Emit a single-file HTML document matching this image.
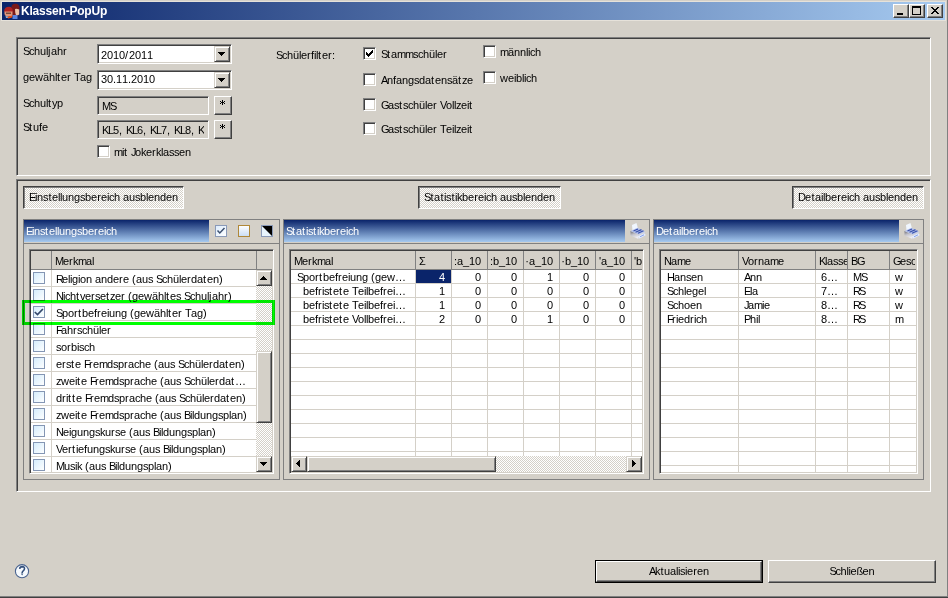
<!DOCTYPE html><html><head><meta charset="utf-8"><style>
html,body{margin:0;padding:0;}
body{width:948px;height:598px;overflow:hidden;background:#d4d0c8;position:relative;font-family:"Liberation Sans",sans-serif;font-size:11px;color:#000;}
div,svg{position:absolute;box-sizing:content-box;}
.t{white-space:nowrap;line-height:13px;font-size:11px;letter-spacing:0;}
.t i{display:inline-block;font-style:normal;}
.sunk{border:1px solid;border-color:#808080 #fff #fff #808080;box-shadow:inset 1px 1px #404040, inset -1px -1px #d4d0c8;}
.rais2{border:1px solid;border-color:#d4d0c8 #404040 #404040 #d4d0c8;box-shadow:inset 1px 1px #fff, inset -1px -1px #808080;background:#d4d0c8;}
.rais{border:1px solid;border-color:#fff #404040 #404040 #fff;box-shadow:inset -1px -1px #808080;background:#d4d0c8;}
.cb{width:11px;height:11px;border:1px solid;border-color:#808080 #fff #fff #808080;box-shadow:inset 1px 1px #404040, inset -1px -1px #d4d0c8;background:#fff;}
.chk{background-color:#fff;background-image:conic-gradient(#d4d0c8 25%, #fff 0 50%, #d4d0c8 0 75%, #fff 0);background-size:2px 2px;}
.grad{background:linear-gradient(#0a246a,#a6caf0);}
</style></head><body>

<div style="left:1px;top:1px;width:945px;height:20px;background:#e6e2da"></div>
<div style="left:947px;top:0px;width:1px;height:597px;background:#808080"></div>
<div style="left:0px;top:596px;width:947px;height:1px;background:#808080"></div>
<div style="left:0px;top:597px;width:948px;height:1px;background:#404040"></div>
<div style="left:2px;top:2px;width:943px;height:18px;background:linear-gradient(90deg,#0a246a,#a6caf0)"></div>
<div class="t" style="left:21px;top:5px;color:#fff;font-weight:bold;font-size:12px;letter-spacing:-0.2px">Klassen-PopUp</div>
<svg style="left:2px;top:2px" width="20" height="18" viewBox="0 0 20 18">
<path d="M9.5 4 Q10.5 1.5 14 1.8 Q17.5 2.2 17.5 6 L17.2 12 Q16.5 14 14.5 14 L10.5 14 Q9.5 10 9.5 4Z" fill="#7a1a1a"/>
<path d="M13 7 Q15 6.5 17.2 7.5 L17.2 12.5 Q16 13.5 14 13 Q13 11 13 7Z" fill="#eec4aa"/>
<path d="M10.5 13 L15.5 13 L15.5 17 L10.5 17Z" fill="#5a84e0"/>
<path d="M2.2 9 Q2.5 4.8 7 4.8 Q10.8 5 10.8 9 L10.8 10 L2.2 10Z" fill="#b02222"/>
<path d="M2.5 9.5 L10.5 9.5 L10.5 13.5 Q9 14.5 6.5 14.5 Q3 14.5 2.5 12Z" fill="#e09478"/>
<rect x="4" y="10.6" width="5" height="1.2" fill="#5a3a30"/>
<path d="M3.5 14 L6.5 14.5 L6.5 16 L4 16Z" fill="#9ab0d0"/>
<path d="M5.5 15 L10.5 13.5 L10 15.5 L6 16.5Z" fill="#f05010"/>
</svg>
<div class="rais" style="left:893px;top:4px;width:14px;height:12px;"></div>
<div class="rais" style="left:909px;top:4px;width:14px;height:12px;"></div>
<div class="rais" style="left:927px;top:4px;width:14px;height:12px;"></div>
<svg style="left:897px;top:13px" width="6" height="2" shape-rendering="crispEdges" fill="#000"><rect x="0" y="0" width="1" height="1"/><rect x="1" y="0" width="1" height="1"/><rect x="2" y="0" width="1" height="1"/><rect x="3" y="0" width="1" height="1"/><rect x="4" y="0" width="1" height="1"/><rect x="5" y="0" width="1" height="1"/><rect x="0" y="1" width="1" height="1"/><rect x="1" y="1" width="1" height="1"/><rect x="2" y="1" width="1" height="1"/><rect x="3" y="1" width="1" height="1"/><rect x="4" y="1" width="1" height="1"/><rect x="5" y="1" width="1" height="1"/></svg>
<svg style="left:912px;top:6px" width="9" height="9" shape-rendering="crispEdges" fill="#000"><rect x="0" y="0" width="1" height="1"/><rect x="1" y="0" width="1" height="1"/><rect x="2" y="0" width="1" height="1"/><rect x="3" y="0" width="1" height="1"/><rect x="4" y="0" width="1" height="1"/><rect x="5" y="0" width="1" height="1"/><rect x="6" y="0" width="1" height="1"/><rect x="7" y="0" width="1" height="1"/><rect x="8" y="0" width="1" height="1"/><rect x="0" y="1" width="1" height="1"/><rect x="1" y="1" width="1" height="1"/><rect x="2" y="1" width="1" height="1"/><rect x="3" y="1" width="1" height="1"/><rect x="4" y="1" width="1" height="1"/><rect x="5" y="1" width="1" height="1"/><rect x="6" y="1" width="1" height="1"/><rect x="7" y="1" width="1" height="1"/><rect x="8" y="1" width="1" height="1"/><rect x="0" y="2" width="1" height="1"/><rect x="8" y="2" width="1" height="1"/><rect x="0" y="3" width="1" height="1"/><rect x="8" y="3" width="1" height="1"/><rect x="0" y="4" width="1" height="1"/><rect x="8" y="4" width="1" height="1"/><rect x="0" y="5" width="1" height="1"/><rect x="8" y="5" width="1" height="1"/><rect x="0" y="6" width="1" height="1"/><rect x="8" y="6" width="1" height="1"/><rect x="0" y="7" width="1" height="1"/><rect x="8" y="7" width="1" height="1"/><rect x="0" y="8" width="1" height="1"/><rect x="1" y="8" width="1" height="1"/><rect x="2" y="8" width="1" height="1"/><rect x="3" y="8" width="1" height="1"/><rect x="4" y="8" width="1" height="1"/><rect x="5" y="8" width="1" height="1"/><rect x="6" y="8" width="1" height="1"/><rect x="7" y="8" width="1" height="1"/><rect x="8" y="8" width="1" height="1"/></svg>
<svg style="left:931px;top:7px" width="8" height="7" shape-rendering="crispEdges" fill="#000"><rect x="0" y="0" width="1" height="1"/><rect x="1" y="0" width="1" height="1"/><rect x="6" y="0" width="1" height="1"/><rect x="7" y="0" width="1" height="1"/><rect x="1" y="1" width="1" height="1"/><rect x="2" y="1" width="1" height="1"/><rect x="5" y="1" width="1" height="1"/><rect x="6" y="1" width="1" height="1"/><rect x="2" y="2" width="1" height="1"/><rect x="3" y="2" width="1" height="1"/><rect x="4" y="2" width="1" height="1"/><rect x="5" y="2" width="1" height="1"/><rect x="3" y="3" width="1" height="1"/><rect x="4" y="3" width="1" height="1"/><rect x="2" y="4" width="1" height="1"/><rect x="3" y="4" width="1" height="1"/><rect x="4" y="4" width="1" height="1"/><rect x="5" y="4" width="1" height="1"/><rect x="1" y="5" width="1" height="1"/><rect x="2" y="5" width="1" height="1"/><rect x="5" y="5" width="1" height="1"/><rect x="6" y="5" width="1" height="1"/><rect x="0" y="6" width="1" height="1"/><rect x="1" y="6" width="1" height="1"/><rect x="6" y="6" width="1" height="1"/><rect x="7" y="6" width="1" height="1"/></svg>
<div style="left:16px;top:37px;width:913px;height:137px;border:1px solid;border-color:#808080 #fff #fff #808080;box-shadow:inset 1px 1px #404040"></div>
<div class="t" style="left:23px;top:45px;"><i style="width:6px">S</i><i style="width:5px">c</i><i style="width:6px">h</i><i style="width:6px">u</i><i style="width:2px">l</i><i style="width:3px">j</i><i style="width:6px">a</i><i style="width:6px">h</i><i style="width:4px">r</i></div>
<div class="t" style="left:23px;top:71px;"><i style="width:6px">g</i><i style="width:6px">e</i><i style="width:8px">w</i><i style="width:6px">ä</i><i style="width:6px">h</i><i style="width:2px">l</i><i style="width:4px">t</i><i style="width:6px">e</i><i style="width:4px">r</i><i style="width:3px"> </i><i style="width:6px">T</i><i style="width:6px">a</i><i style="width:6px">g</i></div>
<div class="t" style="left:23px;top:97px;"><i style="width:6px">S</i><i style="width:5px">c</i><i style="width:6px">h</i><i style="width:6px">u</i><i style="width:2px">l</i><i style="width:4px">t</i><i style="width:5px">y</i><i style="width:6px">p</i></div>
<div class="t" style="left:23px;top:121px;"><i style="width:6px">S</i><i style="width:4px">t</i><i style="width:6px">u</i><i style="width:3px">f</i><i style="width:6px">e</i></div>
<div class="sunk" style="left:97px;top:44px;width:133px;height:18px;background:#fff"></div>
<div class="rais2" style="left:214px;top:46px;width:14px;height:14px;"></div>
<svg style="left:218px;top:52px" width="7" height="4" shape-rendering="crispEdges" fill="#000"><rect x="0" y="0" width="1" height="1"/><rect x="1" y="0" width="1" height="1"/><rect x="2" y="0" width="1" height="1"/><rect x="3" y="0" width="1" height="1"/><rect x="4" y="0" width="1" height="1"/><rect x="5" y="0" width="1" height="1"/><rect x="6" y="0" width="1" height="1"/><rect x="1" y="1" width="1" height="1"/><rect x="2" y="1" width="1" height="1"/><rect x="3" y="1" width="1" height="1"/><rect x="4" y="1" width="1" height="1"/><rect x="5" y="1" width="1" height="1"/><rect x="2" y="2" width="1" height="1"/><rect x="3" y="2" width="1" height="1"/><rect x="4" y="2" width="1" height="1"/><rect x="3" y="3" width="1" height="1"/></svg>
<div class="t" style="left:101px;top:49px;"><i style="width:6px">2</i><i style="width:6px">0</i><i style="width:6px">1</i><i style="width:6px">0</i><i style="width:4px">/</i><i style="width:6px">2</i><i style="width:6px">0</i><i style="width:6px">1</i><i style="width:6px">1</i></div>
<div class="sunk" style="left:97px;top:70px;width:133px;height:18px;background:#fff"></div>
<div class="rais2" style="left:214px;top:72px;width:14px;height:14px;"></div>
<svg style="left:218px;top:78px" width="7" height="4" shape-rendering="crispEdges" fill="#000"><rect x="0" y="0" width="1" height="1"/><rect x="1" y="0" width="1" height="1"/><rect x="2" y="0" width="1" height="1"/><rect x="3" y="0" width="1" height="1"/><rect x="4" y="0" width="1" height="1"/><rect x="5" y="0" width="1" height="1"/><rect x="6" y="0" width="1" height="1"/><rect x="1" y="1" width="1" height="1"/><rect x="2" y="1" width="1" height="1"/><rect x="3" y="1" width="1" height="1"/><rect x="4" y="1" width="1" height="1"/><rect x="5" y="1" width="1" height="1"/><rect x="2" y="2" width="1" height="1"/><rect x="3" y="2" width="1" height="1"/><rect x="4" y="2" width="1" height="1"/><rect x="3" y="3" width="1" height="1"/></svg>
<div class="t" style="left:101px;top:73px;"><i style="width:6px">3</i><i style="width:6px">0</i><i style="width:3px">.</i><i style="width:6px">1</i><i style="width:6px">1</i><i style="width:3px">.</i><i style="width:6px">2</i><i style="width:6px">0</i><i style="width:6px">1</i><i style="width:6px">0</i></div>
<div class="sunk" style="left:97px;top:96px;width:110px;height:17px;background:#d4d0c8"></div>
<div style="left:99px;top:98px;width:105px;height:15px;overflow:hidden"><div class="t" style="left:3px;top:2px"><i style="width:8px">M</i><i style="width:6px">S</i></div></div>
<div class="rais" style="left:214px;top:96px;width:16px;height:17px;"></div>
<svg style="left:220px;top:100px" width="5" height="5" shape-rendering="crispEdges"><rect x="2" y="0" width="1" height="1"/><rect x="0" y="1" width="1" height="1"/><rect x="2" y="1" width="1" height="1"/><rect x="4" y="1" width="1" height="1"/><rect x="1" y="2" width="1" height="1"/><rect x="2" y="2" width="1" height="1"/><rect x="3" y="2" width="1" height="1"/><rect x="0" y="3" width="1" height="1"/><rect x="2" y="3" width="1" height="1"/><rect x="4" y="3" width="1" height="1"/><rect x="2" y="4" width="1" height="1"/></svg>
<div class="sunk" style="left:97px;top:120px;width:110px;height:17px;background:#d4d0c8"></div>
<div style="left:99px;top:122px;width:105px;height:15px;overflow:hidden"><div class="t" style="left:3px;top:2px"><i style="width:6px">K</i><i style="width:5px">L</i><i style="width:6px">5</i><i style="width:4px">,</i><i style="width:3px"> </i><i style="width:6px">K</i><i style="width:5px">L</i><i style="width:6px">6</i><i style="width:4px">,</i><i style="width:3px"> </i><i style="width:6px">K</i><i style="width:5px">L</i><i style="width:6px">7</i><i style="width:4px">,</i><i style="width:3px"> </i><i style="width:6px">K</i><i style="width:5px">L</i><i style="width:6px">8</i><i style="width:4px">,</i><i style="width:3px"> </i><i style="width:6px">K</i></div></div>
<div class="rais" style="left:214px;top:120px;width:16px;height:17px;"></div>
<svg style="left:220px;top:124px" width="5" height="5" shape-rendering="crispEdges"><rect x="2" y="0" width="1" height="1"/><rect x="0" y="1" width="1" height="1"/><rect x="2" y="1" width="1" height="1"/><rect x="4" y="1" width="1" height="1"/><rect x="1" y="2" width="1" height="1"/><rect x="2" y="2" width="1" height="1"/><rect x="3" y="2" width="1" height="1"/><rect x="0" y="3" width="1" height="1"/><rect x="2" y="3" width="1" height="1"/><rect x="4" y="3" width="1" height="1"/><rect x="2" y="4" width="1" height="1"/></svg>
<div class="cb" style="left:97px;top:145px"></div>
<div class="t" style="left:114px;top:146px;"><i style="width:8px">m</i><i style="width:2px">i</i><i style="width:4px">t</i><i style="width:3px"> </i><i style="width:4px">J</i><i style="width:6px">o</i><i style="width:5px">k</i><i style="width:6px">e</i><i style="width:4px">r</i><i style="width:5px">k</i><i style="width:2px">l</i><i style="width:6px">a</i><i style="width:5px">s</i><i style="width:5px">s</i><i style="width:6px">e</i><i style="width:6px">n</i></div>
<div class="t" style="left:276px;top:49px;"><i style="width:6px">S</i><i style="width:5px">c</i><i style="width:6px">h</i><i style="width:6px">ü</i><i style="width:2px">l</i><i style="width:6px">e</i><i style="width:4px">r</i><i style="width:3px">f</i><i style="width:2px">i</i><i style="width:2px">l</i><i style="width:4px">t</i><i style="width:6px">e</i><i style="width:4px">r</i><i style="width:4px">:</i></div>
<div class="cb" style="left:363px;top:47px"></div>
<svg style="left:363px;top:47px" width="13" height="13" shape-rendering="crispEdges"><rect x="9" y="3" width="1" height="1"/><rect x="8" y="4" width="1" height="1"/><rect x="9" y="4" width="1" height="1"/><rect x="3" y="5" width="1" height="1"/><rect x="7" y="5" width="1" height="1"/><rect x="8" y="5" width="1" height="1"/><rect x="9" y="5" width="1" height="1"/><rect x="3" y="6" width="1" height="1"/><rect x="4" y="6" width="1" height="1"/><rect x="6" y="6" width="1" height="1"/><rect x="7" y="6" width="1" height="1"/><rect x="8" y="6" width="1" height="1"/><rect x="3" y="7" width="1" height="1"/><rect x="4" y="7" width="1" height="1"/><rect x="5" y="7" width="1" height="1"/><rect x="6" y="7" width="1" height="1"/><rect x="7" y="7" width="1" height="1"/><rect x="4" y="8" width="1" height="1"/><rect x="5" y="8" width="1" height="1"/><rect x="6" y="8" width="1" height="1"/><rect x="5" y="9" width="1" height="1"/></svg>
<div class="t" style="left:381px;top:48px;"><i style="width:6px">S</i><i style="width:4px">t</i><i style="width:6px">a</i><i style="width:8px">m</i><i style="width:8px">m</i><i style="width:5px">s</i><i style="width:5px">c</i><i style="width:6px">h</i><i style="width:6px">ü</i><i style="width:2px">l</i><i style="width:6px">e</i><i style="width:4px">r</i></div>
<div class="cb" style="left:363px;top:73px"></div>
<div class="t" style="left:381px;top:74px;"><i style="width:6px">A</i><i style="width:6px">n</i><i style="width:3px">f</i><i style="width:6px">a</i><i style="width:6px">n</i><i style="width:6px">g</i><i style="width:5px">s</i><i style="width:6px">d</i><i style="width:6px">a</i><i style="width:4px">t</i><i style="width:6px">e</i><i style="width:6px">n</i><i style="width:5px">s</i><i style="width:6px">ä</i><i style="width:4px">t</i><i style="width:5px">z</i><i style="width:6px">e</i></div>
<div class="cb" style="left:363px;top:98px"></div>
<div class="t" style="left:381px;top:99px;"><i style="width:7px">G</i><i style="width:6px">a</i><i style="width:5px">s</i><i style="width:4px">t</i><i style="width:5px">s</i><i style="width:5px">c</i><i style="width:6px">h</i><i style="width:6px">ü</i><i style="width:2px">l</i><i style="width:6px">e</i><i style="width:4px">r</i><i style="width:3px"> </i><i style="width:6px">V</i><i style="width:6px">o</i><i style="width:2px">l</i><i style="width:2px">l</i><i style="width:5px">z</i><i style="width:6px">e</i><i style="width:2px">i</i><i style="width:4px">t</i></div>
<div class="cb" style="left:363px;top:122px"></div>
<div class="t" style="left:381px;top:123px;"><i style="width:7px">G</i><i style="width:6px">a</i><i style="width:5px">s</i><i style="width:4px">t</i><i style="width:5px">s</i><i style="width:5px">c</i><i style="width:6px">h</i><i style="width:6px">ü</i><i style="width:2px">l</i><i style="width:6px">e</i><i style="width:4px">r</i><i style="width:3px"> </i><i style="width:6px">T</i><i style="width:6px">e</i><i style="width:2px">i</i><i style="width:2px">l</i><i style="width:5px">z</i><i style="width:6px">e</i><i style="width:2px">i</i><i style="width:4px">t</i></div>
<div class="cb" style="left:483px;top:45px"></div>
<div class="t" style="left:500px;top:46px;"><i style="width:8px">m</i><i style="width:6px">ä</i><i style="width:6px">n</i><i style="width:6px">n</i><i style="width:2px">l</i><i style="width:2px">i</i><i style="width:5px">c</i><i style="width:6px">h</i></div>
<div class="cb" style="left:483px;top:71px"></div>
<div class="t" style="left:500px;top:72px;"><i style="width:8px">w</i><i style="width:6px">e</i><i style="width:2px">i</i><i style="width:6px">b</i><i style="width:2px">l</i><i style="width:2px">i</i><i style="width:5px">c</i><i style="width:6px">h</i></div>
<div style="left:16px;top:179px;width:913px;height:311px;border:1px solid;border-color:#808080 #fff #fff #808080;box-shadow:inset 1px 1px #404040"></div>
<div class="chk" style="left:23px;top:186px;width:159px;height:21px;border:1px solid;border-color:#404040 #fff #fff #404040;box-shadow:inset 1px 1px #808080"></div>
<div class="t" style="left:23px;top:191px;width:161px;text-align:center"><i style="width:6px">E</i><i style="width:2px">i</i><i style="width:6px">n</i><i style="width:5px">s</i><i style="width:4px">t</i><i style="width:6px">e</i><i style="width:2px">l</i><i style="width:2px">l</i><i style="width:6px">u</i><i style="width:6px">n</i><i style="width:6px">g</i><i style="width:5px">s</i><i style="width:6px">b</i><i style="width:6px">e</i><i style="width:4px">r</i><i style="width:6px">e</i><i style="width:2px">i</i><i style="width:5px">c</i><i style="width:6px">h</i><i style="width:3px"> </i><i style="width:6px">a</i><i style="width:6px">u</i><i style="width:5px">s</i><i style="width:6px">b</i><i style="width:2px">l</i><i style="width:6px">e</i><i style="width:6px">n</i><i style="width:6px">d</i><i style="width:6px">e</i><i style="width:6px">n</i></div>
<div class="chk" style="left:418px;top:186px;width:141px;height:21px;border:1px solid;border-color:#404040 #fff #fff #404040;box-shadow:inset 1px 1px #808080"></div>
<div class="t" style="left:418px;top:191px;width:143px;text-align:center"><i style="width:6px">S</i><i style="width:4px">t</i><i style="width:6px">a</i><i style="width:4px">t</i><i style="width:2px">i</i><i style="width:5px">s</i><i style="width:4px">t</i><i style="width:2px">i</i><i style="width:5px">k</i><i style="width:6px">b</i><i style="width:6px">e</i><i style="width:4px">r</i><i style="width:6px">e</i><i style="width:2px">i</i><i style="width:5px">c</i><i style="width:6px">h</i><i style="width:3px"> </i><i style="width:6px">a</i><i style="width:6px">u</i><i style="width:5px">s</i><i style="width:6px">b</i><i style="width:2px">l</i><i style="width:6px">e</i><i style="width:6px">n</i><i style="width:6px">d</i><i style="width:6px">e</i><i style="width:6px">n</i></div>
<div class="chk" style="left:792px;top:186px;width:130px;height:21px;border:1px solid;border-color:#404040 #fff #fff #404040;box-shadow:inset 1px 1px #808080"></div>
<div class="t" style="left:792px;top:191px;width:132px;text-align:center"><i style="width:7px">D</i><i style="width:6px">e</i><i style="width:4px">t</i><i style="width:6px">a</i><i style="width:2px">i</i><i style="width:2px">l</i><i style="width:6px">b</i><i style="width:6px">e</i><i style="width:4px">r</i><i style="width:6px">e</i><i style="width:2px">i</i><i style="width:5px">c</i><i style="width:6px">h</i><i style="width:3px"> </i><i style="width:6px">a</i><i style="width:6px">u</i><i style="width:5px">s</i><i style="width:6px">b</i><i style="width:2px">l</i><i style="width:6px">e</i><i style="width:6px">n</i><i style="width:6px">d</i><i style="width:6px">e</i><i style="width:6px">n</i></div>
<div style="left:23px;top:219px;width:255px;height:259px;border:1px solid #808080"></div>
<div style="left:24px;top:220px;width:185px;height:22px;background:linear-gradient(#0a246a,#a6caf0)"></div>
<div style="left:24px;top:243px;width:255px;height:1px;background:#808080"></div>
<div class="t" style="left:26px;top:225px;color:#fff"><i style="width:6px">E</i><i style="width:2px">i</i><i style="width:6px">n</i><i style="width:5px">s</i><i style="width:4px">t</i><i style="width:6px">e</i><i style="width:2px">l</i><i style="width:2px">l</i><i style="width:6px">u</i><i style="width:6px">n</i><i style="width:6px">g</i><i style="width:5px">s</i><i style="width:6px">b</i><i style="width:6px">e</i><i style="width:4px">r</i><i style="width:6px">e</i><i style="width:2px">i</i><i style="width:5px">c</i><i style="width:6px">h</i></div>
<div style="left:283px;top:219px;width:365px;height:259px;border:1px solid #808080"></div>
<div style="left:284px;top:220px;width:341px;height:22px;background:linear-gradient(#0a246a,#a6caf0)"></div>
<div style="left:284px;top:243px;width:365px;height:1px;background:#808080"></div>
<div class="t" style="left:286px;top:225px;color:#fff"><i style="width:6px">S</i><i style="width:4px">t</i><i style="width:6px">a</i><i style="width:4px">t</i><i style="width:2px">i</i><i style="width:5px">s</i><i style="width:4px">t</i><i style="width:2px">i</i><i style="width:5px">k</i><i style="width:6px">b</i><i style="width:6px">e</i><i style="width:4px">r</i><i style="width:6px">e</i><i style="width:2px">i</i><i style="width:5px">c</i><i style="width:6px">h</i></div>
<div style="left:653px;top:219px;width:269px;height:259px;border:1px solid #808080"></div>
<div style="left:654px;top:220px;width:245px;height:22px;background:linear-gradient(#0a246a,#a6caf0)"></div>
<div style="left:654px;top:243px;width:269px;height:1px;background:#808080"></div>
<div class="t" style="left:656px;top:225px;color:#fff"><i style="width:7px">D</i><i style="width:6px">e</i><i style="width:4px">t</i><i style="width:6px">a</i><i style="width:2px">i</i><i style="width:2px">l</i><i style="width:6px">b</i><i style="width:6px">e</i><i style="width:4px">r</i><i style="width:6px">e</i><i style="width:2px">i</i><i style="width:5px">c</i><i style="width:6px">h</i></div>
<svg style="left:215px;top:225px" width="12" height="12"><defs><linearGradient id="g1" x1="0" y1="0" x2="1" y2="1"><stop offset="0" stop-color="#dcecfc"/><stop offset="1" stop-color="#fff"/></linearGradient></defs><rect x="0.5" y="0.5" width="11" height="11" fill="url(#g1)" stroke="#8a9ab8"/><path d="M2.5 5.5 L4.8 8 L9.5 3" fill="none" stroke="#3c5070" stroke-width="1.5"/></svg>
<svg style="left:238px;top:225px" width="12" height="12"><defs><linearGradient id="g2" x1="0" y1="0" x2="0" y2="1"><stop offset="0" stop-color="#fff"/><stop offset="1" stop-color="#c8dcf4"/></linearGradient></defs><rect x="0.5" y="0.5" width="11" height="11" fill="url(#g2)" stroke="#b08838"/></svg>
<svg style="left:261px;top:225px" width="12" height="12"><rect x="0.5" y="0.5" width="11" height="11" fill="#e8f4fc" stroke="#8a9ab8"/><path d="M1 1 L11 1 L11 11Z" fill="#000"/></svg>
<svg style="left:629px;top:222px" width="18" height="18" viewBox="0 0 18 18">
<defs><linearGradient id="pl629" x1="0" y1="0" x2="0.3" y2="1"><stop offset="0" stop-color="#6a6a72"/><stop offset="0.5" stop-color="#c4c4cc"/><stop offset="1" stop-color="#eeeef4"/></linearGradient></defs>
<path d="M1.5 9 L9.5 12.5 L9.5 17 L1.5 13.5Z" fill="url(#pl629)"/>
<path d="M9.5 12.5 L16 9.5 L16 13.5 L9.5 17Z" fill="#d0d4e0"/>
<path d="M3 3 L7.5 1 L9 6.5 L3.5 9Z" fill="#f0f6fe"/>
<path d="M1.5 9 L8.5 5.8 L16 9.5 L9.5 12.5Z" fill="#b4c2ec"/>
<path d="M4.5 9 L9 7 M6.5 10.3 L12.5 7.6 M9 11.3 L14.5 8.8" stroke="#3a52ac" stroke-width="1.2"/>
<path d="M8.5 14.5 L15 11.5 L17 13 L10.5 16.5Z" fill="#e4ecfe"/>
<path d="M11 14.8 L15 12.8" stroke="#7090e8" stroke-width="0.8"/>
</svg>
<svg style="left:903px;top:222px" width="18" height="18" viewBox="0 0 18 18">
<defs><linearGradient id="pl903" x1="0" y1="0" x2="0.3" y2="1"><stop offset="0" stop-color="#6a6a72"/><stop offset="0.5" stop-color="#c4c4cc"/><stop offset="1" stop-color="#eeeef4"/></linearGradient></defs>
<path d="M1.5 9 L9.5 12.5 L9.5 17 L1.5 13.5Z" fill="url(#pl903)"/>
<path d="M9.5 12.5 L16 9.5 L16 13.5 L9.5 17Z" fill="#d0d4e0"/>
<path d="M3 3 L7.5 1 L9 6.5 L3.5 9Z" fill="#f0f6fe"/>
<path d="M1.5 9 L8.5 5.8 L16 9.5 L9.5 12.5Z" fill="#b4c2ec"/>
<path d="M4.5 9 L9 7 M6.5 10.3 L12.5 7.6 M9 11.3 L14.5 8.8" stroke="#3a52ac" stroke-width="1.2"/>
<path d="M8.5 14.5 L15 11.5 L17 13 L10.5 16.5Z" fill="#e4ecfe"/>
<path d="M11 14.8 L15 12.8" stroke="#7090e8" stroke-width="0.8"/>
</svg>
<div class="sunk" style="left:29px;top:249px;width:243px;height:223px;background:#fff"></div>
<div style="left:31px;top:251px;width:241px;height:18px;background:#d4d0c8"></div>
<div style="left:31px;top:269px;width:241px;height:1px;background:#808080"></div>
<div style="left:51px;top:251px;width:1px;height:18px;background:#808080"></div>
<div style="left:256px;top:251px;width:1px;height:18px;background:#808080"></div>
<div class="t" style="left:55px;top:255px;"><i style="width:8px">M</i><i style="width:6px">e</i><i style="width:4px">r</i><i style="width:5px">k</i><i style="width:8px">m</i><i style="width:6px">a</i><i style="width:2px">l</i></div>
<div style="left:31px;top:270px;width:225px;height:202px;overflow:hidden">
<div style="left:0;top:16px;width:225px;height:1px;background:#d4d0c8"></div>
<svg style="left:2px;top:2px" width="12" height="12"><defs><linearGradient id="cg0" x1="0" y1="0" x2="1" y2="1"><stop offset="0" stop-color="#d4ecfc"/><stop offset="1" stop-color="#fff"/></linearGradient></defs><rect x="0.5" y="0.5" width="11" height="11" fill="url(#cg0)" stroke="#8496b4"/></svg>
<div class="t" style="left:25px;top:3px"><i style="width:6px">R</i><i style="width:6px">e</i><i style="width:2px">l</i><i style="width:2px">i</i><i style="width:6px">g</i><i style="width:2px">i</i><i style="width:6px">o</i><i style="width:6px">n</i><i style="width:3px"> </i><i style="width:6px">a</i><i style="width:6px">n</i><i style="width:6px">d</i><i style="width:6px">e</i><i style="width:4px">r</i><i style="width:6px">e</i><i style="width:3px"> </i><i style="width:4px">(</i><i style="width:6px">a</i><i style="width:6px">u</i><i style="width:5px">s</i><i style="width:3px"> </i><i style="width:6px">S</i><i style="width:5px">c</i><i style="width:6px">h</i><i style="width:6px">ü</i><i style="width:2px">l</i><i style="width:6px">e</i><i style="width:4px">r</i><i style="width:6px">d</i><i style="width:6px">a</i><i style="width:4px">t</i><i style="width:6px">e</i><i style="width:6px">n</i><i style="width:4px">)</i></div>
<div style="left:0;top:33px;width:225px;height:1px;background:#d4d0c8"></div>
<svg style="left:2px;top:19px" width="12" height="12"><defs><linearGradient id="cg1" x1="0" y1="0" x2="1" y2="1"><stop offset="0" stop-color="#d4ecfc"/><stop offset="1" stop-color="#fff"/></linearGradient></defs><rect x="0.5" y="0.5" width="11" height="11" fill="url(#cg1)" stroke="#8496b4"/></svg>
<div class="t" style="left:25px;top:20px"><i style="width:7px">N</i><i style="width:2px">i</i><i style="width:5px">c</i><i style="width:6px">h</i><i style="width:4px">t</i><i style="width:5px">v</i><i style="width:6px">e</i><i style="width:4px">r</i><i style="width:5px">s</i><i style="width:6px">e</i><i style="width:4px">t</i><i style="width:5px">z</i><i style="width:6px">e</i><i style="width:4px">r</i><i style="width:3px"> </i><i style="width:4px">(</i><i style="width:6px">g</i><i style="width:6px">e</i><i style="width:8px">w</i><i style="width:6px">ä</i><i style="width:6px">h</i><i style="width:2px">l</i><i style="width:4px">t</i><i style="width:6px">e</i><i style="width:5px">s</i><i style="width:3px"> </i><i style="width:6px">S</i><i style="width:5px">c</i><i style="width:6px">h</i><i style="width:6px">u</i><i style="width:2px">l</i><i style="width:3px">j</i><i style="width:6px">a</i><i style="width:6px">h</i><i style="width:4px">r</i><i style="width:4px">)</i></div>
<div style="left:0;top:50px;width:225px;height:1px;background:#d4d0c8"></div>
<svg style="left:2px;top:36px" width="12" height="12"><defs><linearGradient id="cg2" x1="0" y1="0" x2="1" y2="1"><stop offset="0" stop-color="#d4ecfc"/><stop offset="1" stop-color="#fff"/></linearGradient></defs><rect x="0.5" y="0.5" width="11" height="11" fill="url(#cg2)" stroke="#8496b4"/><path d="M1.8 6 L4.5 8.6 L9.9 3" fill="none" stroke="#34486c" stroke-width="1.7"/></svg>
<div class="t" style="left:25px;top:37px"><i style="width:6px">S</i><i style="width:6px">p</i><i style="width:6px">o</i><i style="width:4px">r</i><i style="width:4px">t</i><i style="width:6px">b</i><i style="width:6px">e</i><i style="width:3px">f</i><i style="width:4px">r</i><i style="width:6px">e</i><i style="width:2px">i</i><i style="width:6px">u</i><i style="width:6px">n</i><i style="width:6px">g</i><i style="width:3px"> </i><i style="width:4px">(</i><i style="width:6px">g</i><i style="width:6px">e</i><i style="width:8px">w</i><i style="width:6px">ä</i><i style="width:6px">h</i><i style="width:2px">l</i><i style="width:4px">t</i><i style="width:6px">e</i><i style="width:4px">r</i><i style="width:3px"> </i><i style="width:6px">T</i><i style="width:6px">a</i><i style="width:6px">g</i><i style="width:4px">)</i></div>
<div style="left:0;top:67px;width:225px;height:1px;background:#d4d0c8"></div>
<svg style="left:2px;top:53px" width="12" height="12"><defs><linearGradient id="cg3" x1="0" y1="0" x2="1" y2="1"><stop offset="0" stop-color="#d4ecfc"/><stop offset="1" stop-color="#fff"/></linearGradient></defs><rect x="0.5" y="0.5" width="11" height="11" fill="url(#cg3)" stroke="#8496b4"/></svg>
<div class="t" style="left:25px;top:54px"><i style="width:5px">F</i><i style="width:6px">a</i><i style="width:6px">h</i><i style="width:4px">r</i><i style="width:5px">s</i><i style="width:5px">c</i><i style="width:6px">h</i><i style="width:6px">ü</i><i style="width:2px">l</i><i style="width:6px">e</i><i style="width:4px">r</i></div>
<div style="left:0;top:84px;width:225px;height:1px;background:#d4d0c8"></div>
<svg style="left:2px;top:70px" width="12" height="12"><defs><linearGradient id="cg4" x1="0" y1="0" x2="1" y2="1"><stop offset="0" stop-color="#d4ecfc"/><stop offset="1" stop-color="#fff"/></linearGradient></defs><rect x="0.5" y="0.5" width="11" height="11" fill="url(#cg4)" stroke="#8496b4"/></svg>
<div class="t" style="left:25px;top:71px"><i style="width:5px">s</i><i style="width:6px">o</i><i style="width:4px">r</i><i style="width:6px">b</i><i style="width:2px">i</i><i style="width:5px">s</i><i style="width:5px">c</i><i style="width:6px">h</i></div>
<div style="left:0;top:101px;width:225px;height:1px;background:#d4d0c8"></div>
<svg style="left:2px;top:87px" width="12" height="12"><defs><linearGradient id="cg5" x1="0" y1="0" x2="1" y2="1"><stop offset="0" stop-color="#d4ecfc"/><stop offset="1" stop-color="#fff"/></linearGradient></defs><rect x="0.5" y="0.5" width="11" height="11" fill="url(#cg5)" stroke="#8496b4"/></svg>
<div class="t" style="left:25px;top:88px"><i style="width:6px">e</i><i style="width:4px">r</i><i style="width:5px">s</i><i style="width:4px">t</i><i style="width:6px">e</i><i style="width:3px"> </i><i style="width:5px">F</i><i style="width:4px">r</i><i style="width:6px">e</i><i style="width:8px">m</i><i style="width:6px">d</i><i style="width:5px">s</i><i style="width:6px">p</i><i style="width:4px">r</i><i style="width:6px">a</i><i style="width:5px">c</i><i style="width:6px">h</i><i style="width:6px">e</i><i style="width:3px"> </i><i style="width:4px">(</i><i style="width:6px">a</i><i style="width:6px">u</i><i style="width:5px">s</i><i style="width:3px"> </i><i style="width:6px">S</i><i style="width:5px">c</i><i style="width:6px">h</i><i style="width:6px">ü</i><i style="width:2px">l</i><i style="width:6px">e</i><i style="width:4px">r</i><i style="width:6px">d</i><i style="width:6px">a</i><i style="width:4px">t</i><i style="width:6px">e</i><i style="width:6px">n</i><i style="width:4px">)</i></div>
<div style="left:0;top:118px;width:225px;height:1px;background:#d4d0c8"></div>
<svg style="left:2px;top:104px" width="12" height="12"><defs><linearGradient id="cg6" x1="0" y1="0" x2="1" y2="1"><stop offset="0" stop-color="#d4ecfc"/><stop offset="1" stop-color="#fff"/></linearGradient></defs><rect x="0.5" y="0.5" width="11" height="11" fill="url(#cg6)" stroke="#8496b4"/></svg>
<div class="t" style="left:25px;top:105px"><i style="width:5px">z</i><i style="width:8px">w</i><i style="width:6px">e</i><i style="width:2px">i</i><i style="width:4px">t</i><i style="width:6px">e</i><i style="width:3px"> </i><i style="width:5px">F</i><i style="width:4px">r</i><i style="width:6px">e</i><i style="width:8px">m</i><i style="width:6px">d</i><i style="width:5px">s</i><i style="width:6px">p</i><i style="width:4px">r</i><i style="width:6px">a</i><i style="width:5px">c</i><i style="width:6px">h</i><i style="width:6px">e</i><i style="width:3px"> </i><i style="width:4px">(</i><i style="width:6px">a</i><i style="width:6px">u</i><i style="width:5px">s</i><i style="width:3px"> </i><i style="width:6px">S</i><i style="width:5px">c</i><i style="width:6px">h</i><i style="width:6px">ü</i><i style="width:2px">l</i><i style="width:6px">e</i><i style="width:4px">r</i><i style="width:6px">d</i><i style="width:6px">a</i><i style="width:4px">t</i><i style="width:11px">…</i></div>
<div style="left:0;top:135px;width:225px;height:1px;background:#d4d0c8"></div>
<svg style="left:2px;top:121px" width="12" height="12"><defs><linearGradient id="cg7" x1="0" y1="0" x2="1" y2="1"><stop offset="0" stop-color="#d4ecfc"/><stop offset="1" stop-color="#fff"/></linearGradient></defs><rect x="0.5" y="0.5" width="11" height="11" fill="url(#cg7)" stroke="#8496b4"/></svg>
<div class="t" style="left:25px;top:122px"><i style="width:6px">d</i><i style="width:4px">r</i><i style="width:2px">i</i><i style="width:4px">t</i><i style="width:4px">t</i><i style="width:6px">e</i><i style="width:3px"> </i><i style="width:5px">F</i><i style="width:4px">r</i><i style="width:6px">e</i><i style="width:8px">m</i><i style="width:6px">d</i><i style="width:5px">s</i><i style="width:6px">p</i><i style="width:4px">r</i><i style="width:6px">a</i><i style="width:5px">c</i><i style="width:6px">h</i><i style="width:6px">e</i><i style="width:3px"> </i><i style="width:4px">(</i><i style="width:6px">a</i><i style="width:6px">u</i><i style="width:5px">s</i><i style="width:3px"> </i><i style="width:6px">S</i><i style="width:5px">c</i><i style="width:6px">h</i><i style="width:6px">ü</i><i style="width:2px">l</i><i style="width:6px">e</i><i style="width:4px">r</i><i style="width:6px">d</i><i style="width:6px">a</i><i style="width:4px">t</i><i style="width:6px">e</i><i style="width:6px">n</i><i style="width:4px">)</i></div>
<div style="left:0;top:152px;width:225px;height:1px;background:#d4d0c8"></div>
<svg style="left:2px;top:138px" width="12" height="12"><defs><linearGradient id="cg8" x1="0" y1="0" x2="1" y2="1"><stop offset="0" stop-color="#d4ecfc"/><stop offset="1" stop-color="#fff"/></linearGradient></defs><rect x="0.5" y="0.5" width="11" height="11" fill="url(#cg8)" stroke="#8496b4"/></svg>
<div class="t" style="left:25px;top:139px"><i style="width:5px">z</i><i style="width:8px">w</i><i style="width:6px">e</i><i style="width:2px">i</i><i style="width:4px">t</i><i style="width:6px">e</i><i style="width:3px"> </i><i style="width:5px">F</i><i style="width:4px">r</i><i style="width:6px">e</i><i style="width:8px">m</i><i style="width:6px">d</i><i style="width:5px">s</i><i style="width:6px">p</i><i style="width:4px">r</i><i style="width:6px">a</i><i style="width:5px">c</i><i style="width:6px">h</i><i style="width:6px">e</i><i style="width:3px"> </i><i style="width:4px">(</i><i style="width:6px">a</i><i style="width:6px">u</i><i style="width:5px">s</i><i style="width:3px"> </i><i style="width:6px">B</i><i style="width:2px">i</i><i style="width:2px">l</i><i style="width:6px">d</i><i style="width:6px">u</i><i style="width:6px">n</i><i style="width:6px">g</i><i style="width:5px">s</i><i style="width:6px">p</i><i style="width:2px">l</i><i style="width:6px">a</i><i style="width:6px">n</i><i style="width:4px">)</i></div>
<div style="left:0;top:169px;width:225px;height:1px;background:#d4d0c8"></div>
<svg style="left:2px;top:155px" width="12" height="12"><defs><linearGradient id="cg9" x1="0" y1="0" x2="1" y2="1"><stop offset="0" stop-color="#d4ecfc"/><stop offset="1" stop-color="#fff"/></linearGradient></defs><rect x="0.5" y="0.5" width="11" height="11" fill="url(#cg9)" stroke="#8496b4"/></svg>
<div class="t" style="left:25px;top:156px"><i style="width:7px">N</i><i style="width:6px">e</i><i style="width:2px">i</i><i style="width:6px">g</i><i style="width:6px">u</i><i style="width:6px">n</i><i style="width:6px">g</i><i style="width:5px">s</i><i style="width:5px">k</i><i style="width:6px">u</i><i style="width:4px">r</i><i style="width:5px">s</i><i style="width:6px">e</i><i style="width:3px"> </i><i style="width:4px">(</i><i style="width:6px">a</i><i style="width:6px">u</i><i style="width:5px">s</i><i style="width:3px"> </i><i style="width:6px">B</i><i style="width:2px">i</i><i style="width:2px">l</i><i style="width:6px">d</i><i style="width:6px">u</i><i style="width:6px">n</i><i style="width:6px">g</i><i style="width:5px">s</i><i style="width:6px">p</i><i style="width:2px">l</i><i style="width:6px">a</i><i style="width:6px">n</i><i style="width:4px">)</i></div>
<div style="left:0;top:186px;width:225px;height:1px;background:#d4d0c8"></div>
<svg style="left:2px;top:172px" width="12" height="12"><defs><linearGradient id="cg10" x1="0" y1="0" x2="1" y2="1"><stop offset="0" stop-color="#d4ecfc"/><stop offset="1" stop-color="#fff"/></linearGradient></defs><rect x="0.5" y="0.5" width="11" height="11" fill="url(#cg10)" stroke="#8496b4"/></svg>
<div class="t" style="left:25px;top:173px"><i style="width:6px">V</i><i style="width:6px">e</i><i style="width:4px">r</i><i style="width:4px">t</i><i style="width:2px">i</i><i style="width:6px">e</i><i style="width:3px">f</i><i style="width:6px">u</i><i style="width:6px">n</i><i style="width:6px">g</i><i style="width:5px">s</i><i style="width:5px">k</i><i style="width:6px">u</i><i style="width:4px">r</i><i style="width:5px">s</i><i style="width:6px">e</i><i style="width:3px"> </i><i style="width:4px">(</i><i style="width:6px">a</i><i style="width:6px">u</i><i style="width:5px">s</i><i style="width:3px"> </i><i style="width:6px">B</i><i style="width:2px">i</i><i style="width:2px">l</i><i style="width:6px">d</i><i style="width:6px">u</i><i style="width:6px">n</i><i style="width:6px">g</i><i style="width:5px">s</i><i style="width:6px">p</i><i style="width:2px">l</i><i style="width:6px">a</i><i style="width:6px">n</i><i style="width:4px">)</i></div>
<div style="left:0;top:203px;width:225px;height:1px;background:#d4d0c8"></div>
<svg style="left:2px;top:189px" width="12" height="12"><defs><linearGradient id="cg11" x1="0" y1="0" x2="1" y2="1"><stop offset="0" stop-color="#d4ecfc"/><stop offset="1" stop-color="#fff"/></linearGradient></defs><rect x="0.5" y="0.5" width="11" height="11" fill="url(#cg11)" stroke="#8496b4"/></svg>
<div class="t" style="left:25px;top:190px"><i style="width:8px">M</i><i style="width:6px">u</i><i style="width:5px">s</i><i style="width:2px">i</i><i style="width:5px">k</i><i style="width:3px"> </i><i style="width:4px">(</i><i style="width:6px">a</i><i style="width:6px">u</i><i style="width:5px">s</i><i style="width:3px"> </i><i style="width:6px">B</i><i style="width:2px">i</i><i style="width:2px">l</i><i style="width:6px">d</i><i style="width:6px">u</i><i style="width:6px">n</i><i style="width:6px">g</i><i style="width:5px">s</i><i style="width:6px">p</i><i style="width:2px">l</i><i style="width:6px">a</i><i style="width:6px">n</i><i style="width:4px">)</i></div>
<div style="left:20px;top:0;width:1px;height:202px;background:#d4d0c8"></div>
</div>
<div class="chk" style="left:256px;top:286px;width:16px;height:170px"></div>
<div class="rais2" style="left:256px;top:270px;width:14px;height:14px;"></div>
<svg style="left:260px;top:276px" width="7" height="4" shape-rendering="crispEdges" fill="#000"><rect x="3" y="0" width="1" height="1"/><rect x="2" y="1" width="1" height="1"/><rect x="3" y="1" width="1" height="1"/><rect x="4" y="1" width="1" height="1"/><rect x="1" y="2" width="1" height="1"/><rect x="2" y="2" width="1" height="1"/><rect x="3" y="2" width="1" height="1"/><rect x="4" y="2" width="1" height="1"/><rect x="5" y="2" width="1" height="1"/><rect x="0" y="3" width="1" height="1"/><rect x="1" y="3" width="1" height="1"/><rect x="2" y="3" width="1" height="1"/><rect x="3" y="3" width="1" height="1"/><rect x="4" y="3" width="1" height="1"/><rect x="5" y="3" width="1" height="1"/><rect x="6" y="3" width="1" height="1"/></svg>
<div class="rais2" style="left:256px;top:351px;width:14px;height:70px;"></div>
<div class="rais2" style="left:256px;top:456px;width:14px;height:14px;"></div>
<svg style="left:260px;top:462px" width="7" height="4" shape-rendering="crispEdges" fill="#000"><rect x="0" y="0" width="1" height="1"/><rect x="1" y="0" width="1" height="1"/><rect x="2" y="0" width="1" height="1"/><rect x="3" y="0" width="1" height="1"/><rect x="4" y="0" width="1" height="1"/><rect x="5" y="0" width="1" height="1"/><rect x="6" y="0" width="1" height="1"/><rect x="1" y="1" width="1" height="1"/><rect x="2" y="1" width="1" height="1"/><rect x="3" y="1" width="1" height="1"/><rect x="4" y="1" width="1" height="1"/><rect x="5" y="1" width="1" height="1"/><rect x="2" y="2" width="1" height="1"/><rect x="3" y="2" width="1" height="1"/><rect x="4" y="2" width="1" height="1"/><rect x="3" y="3" width="1" height="1"/></svg>
<div style="left:22px;top:300px;width:247px;height:19px;border:3px solid #00ff00;mix-blend-mode:multiply"></div>
<div class="sunk" style="left:289px;top:249px;width:353px;height:223px;background:#fff"></div>
<div style="left:291px;top:251px;width:351px;height:18px;background:#d4d0c8"></div>
<div style="left:291px;top:269px;width:351px;height:1px;background:#808080"></div>
<div style="left:291px;top:251px;width:351px;height:221px;overflow:hidden">
<div style="left:124px;top:0;width:1px;height:18px;background:#808080"></div>
<div style="left:124px;top:19px;width:1px;height:202px;background:#d4d0c8"></div>
<div style="left:160px;top:0;width:1px;height:18px;background:#808080"></div>
<div style="left:160px;top:19px;width:1px;height:202px;background:#d4d0c8"></div>
<div style="left:196px;top:0;width:1px;height:18px;background:#808080"></div>
<div style="left:196px;top:19px;width:1px;height:202px;background:#d4d0c8"></div>
<div style="left:232px;top:0;width:1px;height:18px;background:#808080"></div>
<div style="left:232px;top:19px;width:1px;height:202px;background:#d4d0c8"></div>
<div style="left:268px;top:0;width:1px;height:18px;background:#808080"></div>
<div style="left:268px;top:19px;width:1px;height:202px;background:#d4d0c8"></div>
<div style="left:304px;top:0;width:1px;height:18px;background:#808080"></div>
<div style="left:304px;top:19px;width:1px;height:202px;background:#d4d0c8"></div>
<div style="left:340px;top:0;width:1px;height:18px;background:#808080"></div>
<div style="left:340px;top:19px;width:1px;height:202px;background:#d4d0c8"></div>
<div style="left:0;top:32px;width:351px;height:1px;background:#d4d0c8"></div>
<div style="left:0;top:46px;width:351px;height:1px;background:#d4d0c8"></div>
<div style="left:0;top:60px;width:351px;height:1px;background:#d4d0c8"></div>
<div style="left:0;top:74px;width:351px;height:1px;background:#d4d0c8"></div>
<div style="left:0;top:88px;width:351px;height:1px;background:#d4d0c8"></div>
<div style="left:0;top:102px;width:351px;height:1px;background:#d4d0c8"></div>
<div style="left:0;top:116px;width:351px;height:1px;background:#d4d0c8"></div>
<div style="left:0;top:130px;width:351px;height:1px;background:#d4d0c8"></div>
<div style="left:0;top:144px;width:351px;height:1px;background:#d4d0c8"></div>
<div style="left:0;top:158px;width:351px;height:1px;background:#d4d0c8"></div>
<div style="left:0;top:172px;width:351px;height:1px;background:#d4d0c8"></div>
<div style="left:0;top:186px;width:351px;height:1px;background:#d4d0c8"></div>
<div style="left:0;top:200px;width:351px;height:1px;background:#d4d0c8"></div>
<div style="left:0;top:214px;width:351px;height:1px;background:#d4d0c8"></div>
</div>
<div class="t" style="left:294px;top:255px;"><i style="width:8px">M</i><i style="width:6px">e</i><i style="width:4px">r</i><i style="width:5px">k</i><i style="width:8px">m</i><i style="width:6px">a</i><i style="width:2px">l</i></div>
<div class="t" style="left:419px;top:255px;"><i style="width:6px">Σ</i></div>
<div class="t" style="left:452px;top:255px;width:29px;text-align:right"><i style="width:4px">:</i><i style="width:6px">a</i><i style="width:6px">_</i><i style="width:6px">1</i><i style="width:6px">0</i></div>
<div class="t" style="left:488px;top:255px;width:29px;text-align:right"><i style="width:4px">:</i><i style="width:6px">b</i><i style="width:6px">_</i><i style="width:6px">1</i><i style="width:6px">0</i></div>
<div class="t" style="left:524px;top:255px;width:29px;text-align:right">·<i style="width:6px">a</i><i style="width:6px">_</i><i style="width:6px">1</i><i style="width:6px">0</i></div>
<div class="t" style="left:560px;top:255px;width:29px;text-align:right">·<i style="width:6px">b</i><i style="width:6px">_</i><i style="width:6px">1</i><i style="width:6px">0</i></div>
<div class="t" style="left:596px;top:255px;width:29px;text-align:right">'<i style="width:6px">a</i><i style="width:6px">_</i><i style="width:6px">1</i><i style="width:6px">0</i></div>
<div class="t" style="left:634px;top:255px;">'<i style="width:6px">b</i></div>
<div style="left:416px;top:270px;width:35px;height:13px;background:#0a246a"></div>
<div class="t" style="left:297px;top:271px"><i style="width:6px">S</i><i style="width:6px">p</i><i style="width:6px">o</i><i style="width:4px">r</i><i style="width:4px">t</i><i style="width:6px">b</i><i style="width:6px">e</i><i style="width:3px">f</i><i style="width:4px">r</i><i style="width:6px">e</i><i style="width:2px">i</i><i style="width:6px">u</i><i style="width:6px">n</i><i style="width:6px">g</i><i style="width:3px"> </i><i style="width:4px">(</i><i style="width:6px">g</i><i style="width:6px">e</i><i style="width:8px">w</i><i style="width:11px">…</i></div>
<div class="t" style="left:416px;top:271px;width:29px;text-align:right;color:#fff"><i style="width:6px">4</i></div>
<div class="t" style="left:452px;top:271px;width:29px;text-align:right;color:#000"><i style="width:6px">0</i></div>
<div class="t" style="left:488px;top:271px;width:29px;text-align:right;color:#000"><i style="width:6px">0</i></div>
<div class="t" style="left:524px;top:271px;width:29px;text-align:right;color:#000"><i style="width:6px">1</i></div>
<div class="t" style="left:560px;top:271px;width:29px;text-align:right;color:#000"><i style="width:6px">0</i></div>
<div class="t" style="left:596px;top:271px;width:29px;text-align:right;color:#000"><i style="width:6px">0</i></div>
<div class="t" style="left:303px;top:285px"><i style="width:6px">b</i><i style="width:6px">e</i><i style="width:3px">f</i><i style="width:4px">r</i><i style="width:2px">i</i><i style="width:5px">s</i><i style="width:4px">t</i><i style="width:6px">e</i><i style="width:4px">t</i><i style="width:6px">e</i><i style="width:3px"> </i><i style="width:6px">T</i><i style="width:6px">e</i><i style="width:2px">i</i><i style="width:2px">l</i><i style="width:6px">b</i><i style="width:6px">e</i><i style="width:3px">f</i><i style="width:4px">r</i><i style="width:6px">e</i><i style="width:2px">i</i><i style="width:11px">…</i></div>
<div class="t" style="left:416px;top:285px;width:29px;text-align:right;color:#000"><i style="width:6px">1</i></div>
<div class="t" style="left:452px;top:285px;width:29px;text-align:right;color:#000"><i style="width:6px">0</i></div>
<div class="t" style="left:488px;top:285px;width:29px;text-align:right;color:#000"><i style="width:6px">0</i></div>
<div class="t" style="left:524px;top:285px;width:29px;text-align:right;color:#000"><i style="width:6px">0</i></div>
<div class="t" style="left:560px;top:285px;width:29px;text-align:right;color:#000"><i style="width:6px">0</i></div>
<div class="t" style="left:596px;top:285px;width:29px;text-align:right;color:#000"><i style="width:6px">0</i></div>
<div class="t" style="left:303px;top:299px"><i style="width:6px">b</i><i style="width:6px">e</i><i style="width:3px">f</i><i style="width:4px">r</i><i style="width:2px">i</i><i style="width:5px">s</i><i style="width:4px">t</i><i style="width:6px">e</i><i style="width:4px">t</i><i style="width:6px">e</i><i style="width:3px"> </i><i style="width:6px">T</i><i style="width:6px">e</i><i style="width:2px">i</i><i style="width:2px">l</i><i style="width:6px">b</i><i style="width:6px">e</i><i style="width:3px">f</i><i style="width:4px">r</i><i style="width:6px">e</i><i style="width:2px">i</i><i style="width:11px">…</i></div>
<div class="t" style="left:416px;top:299px;width:29px;text-align:right;color:#000"><i style="width:6px">1</i></div>
<div class="t" style="left:452px;top:299px;width:29px;text-align:right;color:#000"><i style="width:6px">0</i></div>
<div class="t" style="left:488px;top:299px;width:29px;text-align:right;color:#000"><i style="width:6px">0</i></div>
<div class="t" style="left:524px;top:299px;width:29px;text-align:right;color:#000"><i style="width:6px">0</i></div>
<div class="t" style="left:560px;top:299px;width:29px;text-align:right;color:#000"><i style="width:6px">0</i></div>
<div class="t" style="left:596px;top:299px;width:29px;text-align:right;color:#000"><i style="width:6px">0</i></div>
<div class="t" style="left:303px;top:313px"><i style="width:6px">b</i><i style="width:6px">e</i><i style="width:3px">f</i><i style="width:4px">r</i><i style="width:2px">i</i><i style="width:5px">s</i><i style="width:4px">t</i><i style="width:6px">e</i><i style="width:4px">t</i><i style="width:6px">e</i><i style="width:3px"> </i><i style="width:6px">V</i><i style="width:6px">o</i><i style="width:2px">l</i><i style="width:2px">l</i><i style="width:6px">b</i><i style="width:6px">e</i><i style="width:3px">f</i><i style="width:4px">r</i><i style="width:6px">e</i><i style="width:2px">i</i><i style="width:11px">…</i></div>
<div class="t" style="left:416px;top:313px;width:29px;text-align:right;color:#000"><i style="width:6px">2</i></div>
<div class="t" style="left:452px;top:313px;width:29px;text-align:right;color:#000"><i style="width:6px">0</i></div>
<div class="t" style="left:488px;top:313px;width:29px;text-align:right;color:#000"><i style="width:6px">0</i></div>
<div class="t" style="left:524px;top:313px;width:29px;text-align:right;color:#000"><i style="width:6px">1</i></div>
<div class="t" style="left:560px;top:313px;width:29px;text-align:right;color:#000"><i style="width:6px">0</i></div>
<div class="t" style="left:596px;top:313px;width:29px;text-align:right;color:#000"><i style="width:6px">0</i></div>
<div class="chk" style="left:291px;top:456px;width:351px;height:16px"></div>
<div class="rais2" style="left:291px;top:456px;width:14px;height:14px;"></div>
<svg style="left:296px;top:460px" width="4" height="7" shape-rendering="crispEdges" fill="#000"><rect x="3" y="0" width="1" height="1"/><rect x="2" y="1" width="1" height="1"/><rect x="3" y="1" width="1" height="1"/><rect x="1" y="2" width="1" height="1"/><rect x="2" y="2" width="1" height="1"/><rect x="3" y="2" width="1" height="1"/><rect x="0" y="3" width="1" height="1"/><rect x="1" y="3" width="1" height="1"/><rect x="2" y="3" width="1" height="1"/><rect x="3" y="3" width="1" height="1"/><rect x="1" y="4" width="1" height="1"/><rect x="2" y="4" width="1" height="1"/><rect x="3" y="4" width="1" height="1"/><rect x="2" y="5" width="1" height="1"/><rect x="3" y="5" width="1" height="1"/><rect x="3" y="6" width="1" height="1"/></svg>
<div class="rais2" style="left:307px;top:456px;width:187px;height:14px;"></div>
<div class="rais2" style="left:626px;top:456px;width:14px;height:14px;"></div>
<svg style="left:632px;top:460px" width="4" height="7" shape-rendering="crispEdges" fill="#000"><rect x="0" y="0" width="1" height="1"/><rect x="0" y="1" width="1" height="1"/><rect x="1" y="1" width="1" height="1"/><rect x="0" y="2" width="1" height="1"/><rect x="1" y="2" width="1" height="1"/><rect x="2" y="2" width="1" height="1"/><rect x="0" y="3" width="1" height="1"/><rect x="1" y="3" width="1" height="1"/><rect x="2" y="3" width="1" height="1"/><rect x="3" y="3" width="1" height="1"/><rect x="0" y="4" width="1" height="1"/><rect x="1" y="4" width="1" height="1"/><rect x="2" y="4" width="1" height="1"/><rect x="0" y="5" width="1" height="1"/><rect x="1" y="5" width="1" height="1"/><rect x="0" y="6" width="1" height="1"/></svg>
<div class="sunk" style="left:659px;top:249px;width:257px;height:223px;background:#fff"></div>
<div style="left:661px;top:251px;width:255px;height:18px;background:#d4d0c8"></div>
<div style="left:661px;top:269px;width:255px;height:1px;background:#808080"></div>
<div style="left:661px;top:251px;width:255px;height:221px;overflow:hidden">
<div style="left:77px;top:0;width:1px;height:18px;background:#808080"></div>
<div style="left:77px;top:19px;width:1px;height:202px;background:#d4d0c8"></div>
<div style="left:154px;top:0;width:1px;height:18px;background:#808080"></div>
<div style="left:154px;top:19px;width:1px;height:202px;background:#d4d0c8"></div>
<div style="left:186px;top:0;width:1px;height:18px;background:#808080"></div>
<div style="left:186px;top:19px;width:1px;height:202px;background:#d4d0c8"></div>
<div style="left:228px;top:0;width:1px;height:18px;background:#808080"></div>
<div style="left:228px;top:19px;width:1px;height:202px;background:#d4d0c8"></div>
<div style="left:0;top:32px;width:255px;height:1px;background:#d4d0c8"></div>
<div style="left:0;top:46px;width:255px;height:1px;background:#d4d0c8"></div>
<div style="left:0;top:60px;width:255px;height:1px;background:#d4d0c8"></div>
<div style="left:0;top:74px;width:255px;height:1px;background:#d4d0c8"></div>
<div style="left:0;top:88px;width:255px;height:1px;background:#d4d0c8"></div>
<div style="left:0;top:102px;width:255px;height:1px;background:#d4d0c8"></div>
<div style="left:0;top:116px;width:255px;height:1px;background:#d4d0c8"></div>
<div style="left:0;top:130px;width:255px;height:1px;background:#d4d0c8"></div>
<div style="left:0;top:144px;width:255px;height:1px;background:#d4d0c8"></div>
<div style="left:0;top:158px;width:255px;height:1px;background:#d4d0c8"></div>
<div style="left:0;top:172px;width:255px;height:1px;background:#d4d0c8"></div>
<div style="left:0;top:186px;width:255px;height:1px;background:#d4d0c8"></div>
<div style="left:0;top:200px;width:255px;height:1px;background:#d4d0c8"></div>
<div style="left:0;top:214px;width:255px;height:1px;background:#d4d0c8"></div>
<div style="left:0px;top:0;width:77px;height:18px;overflow:hidden"><div class="t" style="left:3px;top:4px"><i style="width:7px">N</i><i style="width:6px">a</i><i style="width:8px">m</i><i style="width:6px">e</i></div></div>
<div style="left:78px;top:0;width:76px;height:18px;overflow:hidden"><div class="t" style="left:3px;top:4px"><i style="width:6px">V</i><i style="width:6px">o</i><i style="width:4px">r</i><i style="width:6px">n</i><i style="width:6px">a</i><i style="width:8px">m</i><i style="width:6px">e</i></div></div>
<div style="left:155px;top:0;width:31px;height:18px;overflow:hidden"><div class="t" style="left:3px;top:4px"><i style="width:6px">K</i><i style="width:2px">l</i><i style="width:6px">a</i><i style="width:5px">s</i><i style="width:5px">s</i><i style="width:6px">e</i></div></div>
<div style="left:187px;top:0;width:41px;height:18px;overflow:hidden"><div class="t" style="left:3px;top:4px"><i style="width:6px">B</i><i style="width:7px">G</i></div></div>
<div style="left:229px;top:0;width:25px;height:18px;overflow:hidden"><div class="t" style="left:3px;top:4px"><i style="width:7px">G</i><i style="width:6px">e</i><i style="width:5px">s</i><i style="width:5px">c</i><i style="width:6px">h</i><i style="width:2px">l</i><i style="width:6px">e</i><i style="width:5px">c</i><i style="width:6px">h</i><i style="width:4px">t</i></div></div>
</div>
<div class="t" style="left:667px;top:271px"><i style="width:7px">H</i><i style="width:6px">a</i><i style="width:6px">n</i><i style="width:5px">s</i><i style="width:6px">e</i><i style="width:6px">n</i></div>
<div class="t" style="left:744px;top:271px"><i style="width:6px">A</i><i style="width:6px">n</i><i style="width:6px">n</i></div>
<div class="t" style="left:821px;top:271px"><i style="width:6px">6</i><i style="width:11px">…</i></div>
<div class="t" style="left:853px;top:271px"><i style="width:8px">M</i><i style="width:6px">S</i></div>
<div class="t" style="left:895px;top:271px"><i style="width:8px">w</i></div>
<div class="t" style="left:667px;top:285px"><i style="width:6px">S</i><i style="width:5px">c</i><i style="width:6px">h</i><i style="width:2px">l</i><i style="width:6px">e</i><i style="width:6px">g</i><i style="width:6px">e</i><i style="width:2px">l</i></div>
<div class="t" style="left:744px;top:285px"><i style="width:6px">E</i><i style="width:2px">l</i><i style="width:6px">a</i></div>
<div class="t" style="left:821px;top:285px"><i style="width:6px">7</i><i style="width:11px">…</i></div>
<div class="t" style="left:853px;top:285px"><i style="width:6px">R</i><i style="width:6px">S</i></div>
<div class="t" style="left:895px;top:285px"><i style="width:8px">w</i></div>
<div class="t" style="left:667px;top:299px"><i style="width:6px">S</i><i style="width:5px">c</i><i style="width:6px">h</i><i style="width:6px">o</i><i style="width:6px">e</i><i style="width:6px">n</i></div>
<div class="t" style="left:744px;top:299px"><i style="width:4px">J</i><i style="width:6px">a</i><i style="width:8px">m</i><i style="width:2px">i</i><i style="width:6px">e</i></div>
<div class="t" style="left:821px;top:299px"><i style="width:6px">8</i><i style="width:11px">…</i></div>
<div class="t" style="left:853px;top:299px"><i style="width:6px">R</i><i style="width:6px">S</i></div>
<div class="t" style="left:895px;top:299px"><i style="width:8px">w</i></div>
<div class="t" style="left:667px;top:313px"><i style="width:5px">F</i><i style="width:4px">r</i><i style="width:2px">i</i><i style="width:6px">e</i><i style="width:6px">d</i><i style="width:4px">r</i><i style="width:2px">i</i><i style="width:5px">c</i><i style="width:6px">h</i></div>
<div class="t" style="left:744px;top:313px"><i style="width:6px">P</i><i style="width:6px">h</i><i style="width:2px">i</i><i style="width:2px">l</i></div>
<div class="t" style="left:821px;top:313px"><i style="width:6px">8</i><i style="width:11px">…</i></div>
<div class="t" style="left:853px;top:313px"><i style="width:6px">R</i><i style="width:6px">S</i></div>
<div class="t" style="left:895px;top:313px"><i style="width:8px">m</i></div>
<svg style="left:14px;top:563px" width="16" height="16" viewBox="0 0 16 16"><circle cx="8" cy="8.2" r="6.6" fill="#f6fafe" stroke="#4a6490" stroke-width="1.1"/><path d="M5.6 5.8 Q6 3.6 8.2 3.6 Q10.6 3.7 10.5 5.6 Q10.4 7 9.2 7.8 Q8.2 8.5 8.1 10" fill="none" stroke="#34507c" stroke-width="1.6"/><path d="M6.9 10.4 L9.3 10.4 L8.1 12.6Z" fill="#34507c"/></svg>
<div style="left:595px;top:560px;width:166px;height:21px;border:1px solid #000;background:#d4d0c8"></div>
<div style="left:596px;top:561px;width:166px;height:21px;border-style:solid;border-width:1px 1px 1px 1px;border-color:#fff #404040 #404040 #fff;box-shadow:inset -1px -1px #808080;box-sizing:border-box"></div>
<div class="t" style="left:595px;top:565px;width:168px;text-align:center"><i style="width:6px">A</i><i style="width:5px">k</i><i style="width:4px">t</i><i style="width:6px">u</i><i style="width:6px">a</i><i style="width:2px">l</i><i style="width:2px">i</i><i style="width:5px">s</i><i style="width:2px">i</i><i style="width:6px">e</i><i style="width:4px">r</i><i style="width:6px">e</i><i style="width:6px">n</i></div>
<div class="rais" style="left:768px;top:560px;width:166px;height:21px;"></div>
<div class="t" style="left:768px;top:565px;width:168px;text-align:center"><i style="width:6px">S</i><i style="width:5px">c</i><i style="width:6px">h</i><i style="width:2px">l</i><i style="width:2px">i</i><i style="width:6px">e</i><i style="width:6px">ß</i><i style="width:6px">e</i><i style="width:6px">n</i></div>
</body></html>
